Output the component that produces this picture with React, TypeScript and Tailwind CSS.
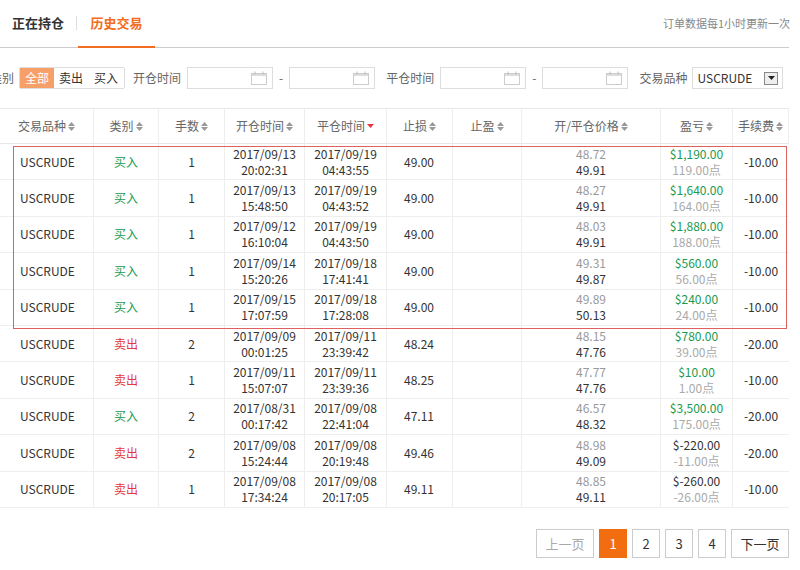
import React from 'react';

const rows = [
  ['买入', '1', '2017/09/13', '20:02:31', '2017/09/19', '04:43:55', '49.00', '48.72', '49.91', '$1,190.00', '119.00点', '-10.00'],
  ['买入', '1', '2017/09/13', '15:48:50', '2017/09/19', '04:43:52', '49.00', '48.27', '49.91', '$1,640.00', '164.00点', '-10.00'],
  ['买入', '1', '2017/09/12', '16:10:04', '2017/09/19', '04:43:50', '49.00', '48.03', '49.91', '$1,880.00', '188.00点', '-10.00'],
  ['买入', '1', '2017/09/14', '15:20:26', '2017/09/18', '17:41:41', '49.00', '49.31', '49.87', '$560.00', '56.00点', '-10.00'],
  ['买入', '1', '2017/09/15', '17:07:59', '2017/09/18', '17:28:08', '49.00', '49.89', '50.13', '$240.00', '24.00点', '-10.00'],
  ['卖出', '2', '2017/09/09', '00:01:25', '2017/09/11', '23:39:42', '48.24', '48.15', '47.76', '$780.00', '39.00点', '-20.00'],
  ['卖出', '1', '2017/09/11', '15:07:07', '2017/09/11', '23:39:36', '48.25', '47.77', '47.76', '$10.00', '1.00点', '-10.00'],
  ['买入', '2', '2017/08/31', '00:17:42', '2017/09/08', '22:41:04', '47.11', '46.57', '48.32', '$3,500.00', '175.00点', '-20.00'],
  ['卖出', '2', '2017/09/08', '15:24:44', '2017/09/08', '20:19:48', '49.46', '48.98', '49.09', '$-220.00', '-11.00点', '-20.00'],
  ['卖出', '1', '2017/09/08', '17:34:24', '2017/09/08', '20:17:05', '49.11', '48.85', '49.11', '$-260.00', '-26.00点', '-10.00'],
];

const widths = ['w-[94px]', 'w-[65px]', 'w-[66px]', 'w-[80px]', 'w-[82px]', 'w-[66px]', 'w-[69px]', 'w-[139px]', 'w-[72px]', 'w-[56px]'];

function Sort({ down }: { down?: boolean }) {
  if (down)
    return (
      <svg width="7" height="8" viewBox="0 0 7 8" className="inline ml-[2px]">
        <path d="M0 2h7L3.5 6z" fill="#e4393c" />
      </svg>
    );
  return (
    <svg width="7" height="9" viewBox="0 0 7 9" className="inline ml-[2px]">
      <path d="M0 4h7L3.5 0z M0 5h7L3.5 9z" fill="#999" />
    </svg>
  );
}

function Cal() {
  return (
    <svg width="16" height="14" viewBox="0 0 16 14">
      <rect x="0.5" y="2.5" width="15" height="11" fill="none" stroke="#ccc" />
      <rect x="1" y="3" width="14" height="2" fill="#ddd" />
      <path d="M4 0.5v3M12 0.5v3" stroke="#bbb" />
    </svg>
  );
}

function DateBox() {
  return (
    <div className="w-[86px] shrink-0 h-[22px] border border-[#ddd] flex items-center justify-end pr-[5px]">
      <Cal />
    </div>
  );
}

export default function App() {
  const font = { fontFamily: '"Microsoft YaHei", "Noto Sans CJK SC", sans-serif' };
  const heads = ['交易品种', '类别', '手数', '开仓时间', '平仓时间', '止损', '止盈', '开/平仓价格', '盈亏', '手续费'];
  return (
    <div className="w-[800px] h-[570px] bg-white text-[12px] text-[#333] overflow-hidden whitespace-nowrap" style={font}>
      <div className="w-[789px] h-[48px] border-b border-[#ccc] flex items-end">
        <div className="h-[48px] px-[12px] flex items-center font-bold text-[13px] text-[#333]">正在持仓</div>
        <div className="w-px h-[14px] bg-[#ddd] mb-[17px]" />
        <div className="h-[48px] w-[77px] ml-[1px] flex items-center justify-center font-bold text-[13px] text-[#f26d21] border-b-2 border-[#f26d21] mb-[-1px]">历史交易</div>
        <div className="flex-1" />
        <div className="h-[48px] flex items-center text-[#888] text-[11px] mr-[-1px]">订单数据每1小时更新一次</div>
      </div>
      <div className="h-[60px] w-[820px] flex items-center text-[#666] ml-[-10px]">
        <span className="mr-[5px] shrink-0">类别</span>
        <div className="flex shrink-0 border border-[#ddd] h-[22px] items-center rounded-[2px]">
          <span className="bg-[#f79f68] text-white h-full px-[5px] flex items-center">全部</span>
          <span className="px-[5px] text-[#333]">卖出</span>
          <span className="px-[6px] text-[#333]">买入</span>
        </div>
        <span className="ml-[8px] mr-[6px] shrink-0">开仓时间</span>
        <DateBox />
        <span className="mx-[6px]">-</span>
        <DateBox />
        <span className="ml-[11px] mr-[6px] shrink-0">平仓时间</span>
        <DateBox />
        <span className="mx-[6px]">-</span>
        <DateBox />
        <span className="ml-[11px] mr-[5px] shrink-0">交易品种</span>
        <div className="w-[91px] shrink-0 h-[22px] border border-[#ddd] flex items-center justify-between pl-[4px] pr-[4px] text-[#333]">
          <span>USCRUDE</span>
          <span className="w-[14px] h-[13px] border border-[#888] bg-[#eee] flex items-center justify-center">
            <svg width="7" height="4"><path d="M0 0h7L3.5 4z" fill="#222" /></svg>
          </span>
        </div>
      </div>
      <div className="relative w-[789px]">
        <div className="flex h-[36px] border-y border-[#e8e8e8] text-[#666]">
          {heads.map((h, i) => (
            <div key={h} className={`${widths[i]} border-r border-[#eee] flex items-center justify-center`}>
              {h}
              <Sort down={i === 4} />
            </div>
          ))}
        </div>
        {rows.map((r, idx) => (
          <div key={idx} className="flex h-[36.4px] border-b border-[#eee] leading-[16px]">
            <div className={`${widths[0]} border-r border-[#eee] flex items-center pl-[20px]`}>USCRUDE</div>
            <div className={`${widths[1]} border-r border-[#eee] flex items-center justify-center ${r[0] === '买入' ? 'text-[#1a9a50]' : 'text-[#e4393c]'}`}>{r[0]}</div>
            <div className={`${widths[2]} border-r border-[#eee] flex items-center justify-center`}>{r[1]}</div>
            <div className={`${widths[3]} border-r border-[#eee] flex flex-col items-center justify-center`}>
              <span>{r[2]}</span><span>{r[3]}</span>
            </div>
            <div className={`${widths[4]} border-r border-[#eee] flex flex-col items-center justify-center`}>
              <span>{r[4]}</span><span>{r[5]}</span>
            </div>
            <div className={`${widths[5]} border-r border-[#eee] flex items-center pl-[17px]`}>{r[6]}</div>
            <div className={`${widths[6]} border-r border-[#eee]`} />
            <div className={`${widths[7]} border-r border-[#eee] flex flex-col items-center justify-center`}>
              <span className="text-[#999]">{r[7]}</span><span>{r[8]}</span>
            </div>
            <div className={`${widths[8]} border-r border-[#eee] flex flex-col items-center justify-center`}>
              <span className={r[9].includes('-') ? 'text-[#333]' : 'text-[#1a9a50]'}>{r[9]}</span>
              <span className="text-[#aaa]">{r[10]}</span>
            </div>
            <div className={`${widths[9]} flex items-center justify-center`}>{r[11]}</div>
          </div>
        ))}
        <div className="absolute left-[13px] top-[38px] w-[774px] h-[183px] border border-[#e06060] pointer-events-none" />
      </div>
      <div className="w-[789px] flex justify-end gap-[5px] mt-[21px] text-[13px]">
        <span className="w-[58px] h-[29px] border border-[#ccc] flex items-center justify-center text-[#aaa]">上一页</span>
        <span className="w-[28px] h-[29px] bg-[#f26d0f] text-white flex items-center justify-center">1</span>
        {['2', '3', '4'].map(n => (
          <span key={n} className="w-[28px] h-[29px] border border-[#ccc] flex items-center justify-center">{n}</span>
        ))}
        <span className="w-[58px] h-[29px] border border-[#ccc] flex items-center justify-center">下一页</span>
      </div>
    </div>
  );
}
